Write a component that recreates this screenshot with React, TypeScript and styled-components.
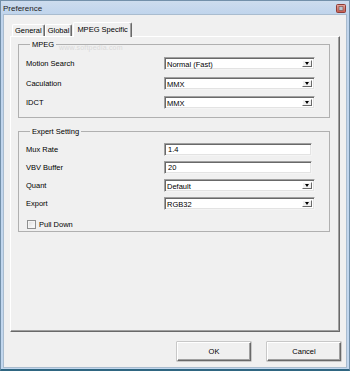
import styled, { createGlobalStyle } from 'styled-components';

const GlobalStyle = createGlobalStyle`
  html, body {
    margin: 0;
    padding: 0;
    width: 350px;
    height: 371px;
    overflow: hidden;
    background: #fff;
  }
  body {
    font-family: "Liberation Sans", Arial, sans-serif;
    font-size: 7.5px;
    color: #000;
  }
`;

type Field =
  | { kind: 'combo'; label: string; value: string }
  | { kind: 'text'; label: string; value: string };

const mpegFields: Field[] = [
  { kind: 'combo', label: 'Motion Search', value: 'Normal (Fast)' },
  { kind: 'combo', label: 'Caculation', value: 'MMX' },
  { kind: 'combo', label: 'IDCT', value: 'MMX' },
];

const expertFields: Field[] = [
  { kind: 'text', label: 'Mux Rate', value: '1.4' },
  { kind: 'text', label: 'VBV Buffer', value: '20' },
  { kind: 'combo', label: 'Quant', value: 'Default' },
  { kind: 'combo', label: 'Export', value: 'RGB32' },
];

function CloseIcon() {
  return (
    <svg width="10" height="9" viewBox="0 0 10 9">
      <defs>
        <linearGradient id="cg" x1="0" y1="0" x2="0" y2="1">
          <stop offset="0" stopColor="#e7a89f" />
          <stop offset="1" stopColor="#c4584c" />
        </linearGradient>
      </defs>
      <rect x="0.5" y="0.5" width="9" height="8" rx="1" fill="url(#cg)" stroke="#8e3d36" />
      <rect x="3" y="2.5" width="4" height="4" fill="#b9c4cf" stroke="#7a4a46" strokeWidth="0.6" />
    </svg>
  );
}

function FieldRow({ field }: { field: Field }) {
  return (
    <Row>
      <Label>{field.label}</Label>
      {field.kind === 'combo' ? (
        <Combo>
          <ComboValue>{field.value}</ComboValue>
          <DropButton>
            <Arrow />
          </DropButton>
        </Combo>
      ) : (
        <TextBox>{field.value}</TextBox>
      )}
    </Row>
  );
}

function App() {
  return (
    <>
      <GlobalStyle />
      <Window>
        <TitleBar>
          <Title>Preference</Title>
          <CloseIcon />
        </TitleBar>
        <Client>
          <TabStrip>
            <Tab>General</Tab>
            <Tab>Global</Tab>
            <Tab $active>MPEG Specific</Tab>
          </TabStrip>
          <Panel>
            <Group $gap={6.5} $top={8} $bottom={8}>
              <Legend>MPEG</Legend>
              {mpegFields.map(f => (
                <FieldRow key={f.label} field={f} />
              ))}
            </Group>
            <Group $gap={5} $top={7} $bottom={1} $spaced>
              <Legend>Expert Setting</Legend>
              {expertFields.map(f => (
                <FieldRow key={f.label} field={f} />
              ))}
              <CheckRow>
                <CheckBox />
                <span>Pull Down</span>
              </CheckRow>
            </Group>
          </Panel>
          <ButtonRow>
            <PushButton>OK</PushButton>
            <PushButton>Cancel</PushButton>
          </ButtonRow>
        </Client>
        <Watermark>www.softpedia.com</Watermark>
      </Window>
    </>
  );
}

const Window = styled.div`
  position: relative;
  box-sizing: border-box;
  width: 350px;
  height: 371px;
  display: flex;
  flex-direction: column;
  border: 1px solid #7390aa;
  border-bottom: 2px solid #2f6681;
  padding: 0 2px 1px 2px;
  background: linear-gradient(#cddcee, #bfd4ec 14px, #c2d7ee);
`;

const TitleBar = styled.div`
  height: 13px;
  display: flex;
  align-items: center;
  justify-content: space-between;
  padding: 0 1px 0 0;
  svg {
    margin-top: 2px;
  }
`;

const Title = styled.span`
  font-size: 8px;
  color: #222;
  margin-top: 1px;
`;

const Client = styled.div`
  flex: 1;
  display: flex;
  flex-direction: column;
  background: #f0f0f0;
  border: 1px solid #a9bccf;
  padding: 0 6px;
`;

const TabStrip = styled.div`
  display: flex;
  align-items: flex-end;
  height: 14px;
  margin-top: 7px;
  padding-left: 2px;
  position: relative;
  z-index: 1;
`;

const Tab = styled.div<{ $active?: boolean }>`
  box-sizing: border-box;
  height: ${p => (p.$active ? 15 : 12)}px;
  margin-bottom: ${p => (p.$active ? -1 : 0)}px;
  padding: 0 ${p => (p.$active ? 3 : 2)}px ${p => (p.$active ? 2 : 0)}px;
  margin-left: ${p => (p.$active ? 1 : 0)}px;
  display: flex;
  align-items: center;
  background: #f0f0f0;
  border-top: 1px solid #fff;
  border-left: 1px solid #fff;
  border-right: 1px solid #696969;
  box-shadow: inset -1px 0 0 #a0a0a0;
  border-radius: 2px 2px 0 0;
`;

const Panel = styled.div`
  box-sizing: border-box;
  height: 296px;
  border-top: 1px solid #fff;
  border-left: 1px solid #fff;
  border-right: 1px solid #696969;
  border-bottom: 1px solid #696969;
  box-shadow: inset -1px -1px 0 #a0a0a0;
  padding: 3px 9px 0 7px;
`;

const Group = styled.fieldset<{ $gap: number; $top: number; $bottom: number; $spaced?: boolean }>`
  margin: ${p => (p.$spaced ? 9 : 0)}px 0 0 0;
  padding: ${p => p.$top}px 14px ${p => p.$bottom}px 7px;
  border: 1px solid #b0b0b0;
  display: flex;
  flex-direction: column;
  gap: ${p => p.$gap}px;
`;

const Legend = styled.legend`
  margin-left: 4px;
  padding: 0 2px;
  line-height: 9px;
  height: 9px;
`;

const Row = styled.div`
  display: flex;
  align-items: center;
  height: 13px;
`;

const Label = styled.span`
  width: 138px;
  flex: none;
`;

const sunken = `
  box-sizing: border-box;
  height: 13px;
  background: #fff;
  border: 1px solid;
  border-color: #a0a0a0 #f4f4f4 #f4f4f4 #a0a0a0;
  box-shadow: inset 1px 1px 0 #696969, inset -1px -1px 0 #e3e3e3;
`;

const Combo = styled.div`
  ${sunken}
  width: 151px;
  display: flex;
  align-items: stretch;
  padding: 2px;
`;

const ComboValue = styled.span`
  flex: 1;
  line-height: 9px;
  white-space: nowrap;
`;

const DropButton = styled.div`
  box-sizing: border-box;
  width: 10px;
  background: #f0f0f0;
  border-top: 1px solid #fff;
  border-left: 1px solid #fff;
  border-right: 1px solid #696969;
  border-bottom: 1px solid #696969;
  display: flex;
  align-items: center;
  justify-content: center;
`;

const Arrow = styled.div`
  width: 0;
  height: 0;
  border-left: 2.5px solid transparent;
  border-right: 2.5px solid transparent;
  border-top: 3px solid #000;
`;

const TextBox = styled.div`
  ${sunken}
  width: 148px;
  padding: 0 3px;
  line-height: 11px;
`;

const CheckRow = styled.div`
  display: flex;
  align-items: center;
  height: 12px;
  margin-top: 3px;
  gap: 3px;
`;

const CheckBox = styled.div`
  box-sizing: border-box;
  width: 9px;
  height: 9px;
  margin-left: 1px;
  border: 1px solid #8e8f8f;
  background: linear-gradient(135deg, #dcdcdc, #fff);
  box-shadow: inset 0 0 0 1px #f4f4f4;
`;

const ButtonRow = styled.div`
  display: flex;
  justify-content: flex-end;
  gap: 16px;
  margin: 10px -1px 0 0;
`;

const PushButton = styled.div`
  box-sizing: border-box;
  width: 74px;
  height: 19px;
  display: flex;
  align-items: center;
  justify-content: center;
  background: #f0f0f0;
  border-top: 1px solid #fff;
  border-left: 1px solid #fff;
  border-right: 1px solid #696969;
  border-bottom: 1px solid #696969;
  box-shadow: inset -1px -1px 0 #a0a0a0, 0 0 0 0.5px #a0a0a0;
`;

const Watermark = styled.div`
  position: absolute;
  left: 58px;
  top: 43px;
  font-size: 7px;
  color: #dadada;
  letter-spacing: 0.2px;
  pointer-events: none;
`;

export default App;
